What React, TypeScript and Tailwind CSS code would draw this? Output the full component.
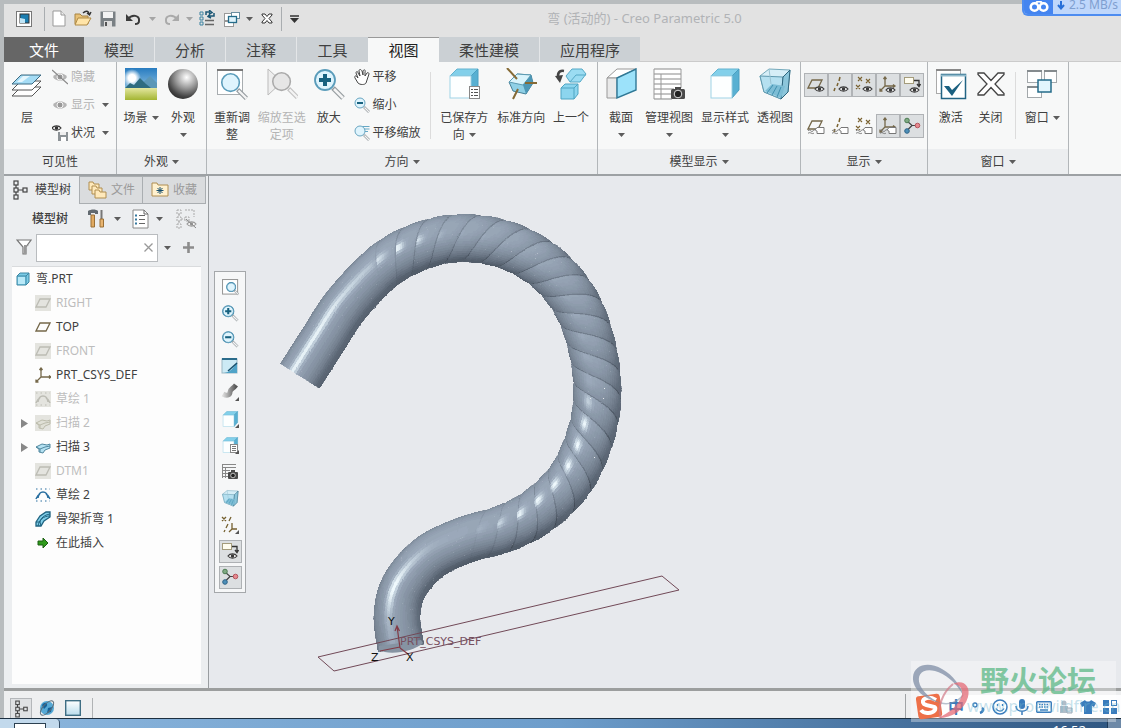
import React from "react";
import type { ReactNode } from "react";

/* ---------- shared drawing helpers ---------- */

function Svg({ w = 16, h, box, children }: { w?: number; h?: number; box?: string; children: ReactNode }) {
  const hh = h ?? w;
  return (
    <svg width={w} height={hh} viewBox={box ?? `0 0 ${w} ${hh}`} fill="none" aria-hidden="true" className="block shrink-0">
      {children}
    </svg>
  );
}

function Caret({ color = "#5c5c5c" }: { color?: string }) {
  return (
    <Svg w={7} h={4}>
      <path d="M0 0H7L3.500 4Z" fill={color} />
    </Svg>
  );
}

function Eye({ x, y, c = "#3a3a3a" }: { x: number; y: number; c?: string }) {
  return (
    <g transform={`translate(${x} ${y})`}>
      <path d="M0 3C2 .2 7 .2 9 3C7 5.9 2 5.9 0 3Z" fill="#fff" stroke={c} strokeWidth="1.2" />
      <circle cx="4.5" cy="3" r="1.8" fill={c} />
    </g>
  );
}

function Tag({ x, y }: { x: number; y: number }) {
  return (
    <g transform={`translate(${x} ${y})`}>
      <path d="M2 3L4 .5H11V6.500H4V4" fill="#fff" stroke="#777" />
      <path d="M-5 4C-3 1 -2 6 0 4C1 2 2 3 4 4M-5 6.500C-3 4 -1 8 1 6" stroke="#777" />
    </g>
  );
}

function Glass({ sign, muted }: { sign?: "+" | "-"; muted?: boolean }) {
  const rim = muted ? "#aaa" : "#5a9cba";
  return (
    <g>
      <path d="M20 20L30 30" stroke={muted ? "#c2c2c2" : "#949b9f"} strokeWidth="5" />
      <path d="M21 21L30 30" stroke="#f4f4f4" strokeWidth="2.6" />
      <circle cx="12" cy="12" r="10" fill={muted ? "#e6e6e6" : "#dff4fd"} stroke={rim} strokeWidth="1.8" />
      {sign && <path d={sign === "+" ? "M12 6V18M6 12H18" : "M6 12H18"} stroke="#17617f" strokeWidth="4" />}
    </g>
  );
}

const Cube = ({ list }: { list?: boolean }) => (
  <g>
    <path d="M2 8L9 1H30L23 8Z" fill="#83d0ea" stroke="#62b3d0" />
    <path d="M23 8L30 1V22L23 30Z" fill="#58b0d2" stroke="#4a9fc1" />
    <rect x="2" y="8" width="21" height="22" fill="#fdffff" stroke="#9fd3e6" />
    {list && (
      <g>
        <rect x="21.500" y="18.500" width="10" height="12" fill="#fff" stroke="#888" />
        <path d="M23 21.500H25M26 21.500H30M23 24.500H25M26 24.500H30M23 27.500H25M26 27.500H30" stroke="#555" />
      </g>
    )}
  </g>
);

const Persp = () => (
  <g>
    <path d="M1 8L10 1L31 2L29 24L22 31L5 24Z" fill="#d6eef7" stroke="#74a9bb" />
    <path d="M1 8L24 9L22 31L5 24Z" fill="#b5e0f0" stroke="#5f98ae" />
    <path d="M24 9L31 2L29 24L22 31Z" fill="#8cc6db" stroke="#2d647c" />
    <path d="M6 23L13 16L26 18L22 30Z" fill="#7dbdd5" />
    <path d="M8 25L14 17M13 27L18 18M18 29L22 19" stroke="#3f90af" />
    <path d="M10 1L12 16" stroke="#9ac3d2" />
  </g>
);

const Report = () => (
  <g>
    <path d="M2 1H29V30H2Z" fill="#fff" />
    <path d="M2 1H29M2 6H29M2 11H29M2 16H29M2 21H22M2 26H20M2 31H20" stroke="#8a8a8a" strokeWidth="1.200" />
    <path d="M2 1V31M9 6V31M29 1V20" stroke="#999" />
    <rect x="19" y="21" width="14" height="10" rx="1.500" fill="#4a4a4a" />
    <rect x="23" y="19" width="6" height="3" fill="#4a4a4a" />
    <circle cx="26" cy="26" r="3.800" fill="#222" stroke="#ddd" strokeWidth="1" />
  </g>
);

const Triad = () => (
  <g>
    <path d="M4 4L9 8.500L15 8.500M9 8.500L4 13.500" stroke="#444" strokeWidth="1.200" />
    <circle cx="4" cy="3.500" r="2.300" fill="#7fa982" stroke="#4e7d55" />
    <circle cx="14.500" cy="8.500" r="2.300" fill="#e58a90" stroke="#b8555d" />
    <circle cx="4" cy="14" r="2.300" fill="#4d8fb8" stroke="#2f6488" />
  </g>
);

const Note = () => (
  <g>
    <rect x="1.500" y="1.500" width="9" height="6" fill="#fffdf0" stroke="#a49c7c" />
    <path d="M11 4.500H16V9M14 8L16 10.500L17.500 8" stroke="#333" strokeWidth="1.300" />
    <Eye x={7} y={11} />
  </g>
);

const Plane = ({ muted, eye, tag }: { muted?: boolean; eye?: boolean; tag?: boolean }) => (
  <g>
    {muted && <rect width="16" height="16" fill="#e4e4df" />}
    <path d="M5 4H15L11 12H1Z" stroke={muted ? "#bcbcb4" : "#75684a"} strokeWidth="1.300" />
    {eye && <Eye x={8} y={10} />}
    {tag && <Tag x={6} y={10} />}
  </g>
);

const Axis = () => <path d="M9 1L8 5M7 7L6 10M4 12L3 15" stroke="#7a6230" strokeWidth="1.500" />;
const Points = () => <path d="M3 1L7 5M7 1L3 5M11 3L15 7M15 3L11 7M1 9L5 13M5 9L1 13" stroke="#7a6230" strokeWidth="1.100" />;
const Csys = () => (
  <path d="M6 1V10H16M6 10L1 15M4.500 3L6 1L7.500 3M14 8.500L16 10L14 11.500M1 12.500V15H3.500" stroke="#75684a" strokeWidth="1.300" />
);

const TreeNodes = ({ c = "#444" }: { c?: string }) => (
  <g stroke={c} strokeWidth="1.200">
    <rect x="2" y="1" width="4" height="4" />
    <rect x="2" y="8" width="4" height="4" />
    <rect x="2" y="15" width="4" height="4" />
    <rect x="11" y="8" width="4" height="4" />
    <path d="M4 5V8M4 12V15M6 10H11" />
  </g>
);

const Windows = () => (
  <g stroke="#a3a8ab">
    <rect x="1.500" y="2.500" width="14" height="12" fill="#fff" />
    <rect x="18.500" y="2.500" width="12" height="12" fill="#fff" />
    <rect x="1.500" y="18.500" width="14" height="11" fill="#fff" />
    <path d="M1 3H16M18 3H31M1 19H16" stroke="#858b8e" strokeWidth="2" />
    <rect x="12" y="12" width="13" height="12" fill="#e3f6fd" stroke="#246b89" strokeWidth="1.500" />
  </g>
);

/* ---------- ribbon ---------- */

function Big({ icon, lines, caret, muted, width }: { icon: ReactNode; lines: string[]; caret?: "inline" | "below"; muted?: boolean; width: string }) {
  return (
    <button type="button" disabled={muted} className={`flex flex-col items-center pt-1.5 ${width}`}>
      <span className="mb-[9px] flex h-8 items-center justify-center">{icon}</span>
      {lines.map((l, i) => (
        <span key={l} className={`flex items-center gap-1 whitespace-nowrap text-[12px] leading-[17px] ${muted ? "text-[#b4b4b4]" : "text-[#404040]"}`}>
          {l}
          {caret === "inline" && i === lines.length - 1 && <Caret />}
        </span>
      ))}
      {caret === "below" && (
        <span className="flex h-[17px] items-center">
          <Caret />
        </span>
      )}
    </button>
  );
}

function Small({ icon, text, caret, muted }: { icon: ReactNode; text: string; caret?: boolean; muted?: boolean }) {
  return (
    <button type="button" disabled={muted} className={`flex h-7 items-center gap-[3px] whitespace-nowrap text-[12px] ${muted ? "text-[#b4b4b4]" : "text-[#404040]"}`}>
      {icon}
      <span>{text}</span>
      {caret && (
        <span className="ml-1">
          <Caret />
        </span>
      )}
    </button>
  );
}

function Group({ label, caret, width, children }: { label: string; caret?: boolean; width: string; children: ReactNode }) {
  return (
    <section aria-label={label} className={`flex shrink-0 flex-col border-r border-[#b2b6b9] ${width}`}>
      <div className="flex h-[87px] items-stretch">{children}</div>
      <div className="flex h-[25px] items-center justify-center gap-1 bg-[#eceef0] text-[12px] text-[#404040]">
        {label}
        {caret && <Caret />}
      </div>
    </section>
  );
}

const EyeIcon = ({ slash }: { slash?: boolean }) => (
  <Svg>
    <path d="M1 8C4 3 12 3 15 8C12 13 4 13 1 8Z" fill="#b4b4b4" />
    <circle cx="8" cy="8" r="3" fill="#999" stroke="#f4f4f4" />
    {slash && <path d="M0 1L16 15" stroke="#888" strokeWidth="1.300" />}
  </Svg>
);

const toggles: { name: string; on: boolean; art: ReactNode }[] = [
  { name: "平面显示", on: true, art: <Plane eye /> },
  { name: "轴显示", on: true, art: <g><Axis /><Eye x={8} y={10} /></g> },
  { name: "点显示", on: true, art: <g><Points /><Eye x={8} y={10} /></g> },
  { name: "坐标系显示", on: true, art: <g><Csys /><Eye x={7} y={11} /></g> },
  { name: "注释显示", on: true, art: <Note /> },
  { name: "平面标记显示", on: false, art: <Plane tag /> },
  { name: "轴标记显示", on: false, art: <g><Axis /><Tag x={6} y={10} /></g> },
  { name: "点标记显示", on: false, art: <g><Points /><Tag x={6} y={10} /></g> },
  { name: "坐标系标记显示", on: true, art: <g><Csys /><Tag x={6} y={10} /></g> },
  { name: "旋转中心", on: true, art: <Triad /> },
];

function Toggle({ item }: { item: (typeof toggles)[number] }) {
  return (
    <button type="button" aria-label={item.name} aria-pressed={item.on} className={`flex h-6 w-6 items-center justify-center ${item.on ? "border border-[#b0b3b6] bg-[#dcdfe1]" : ""}`}>
      <Svg w={18}>{item.art}</Svg>
    </button>
  );
}

function Ribbon() {
  return (
    <div className="flex h-[112px] bg-[#f7f8f8]">
      <Group label="可见性" width="w-[113px]">
        <Big width="w-[46px]" lines={["层"]} icon={
          <Svg w={32}>
            <path d="M1 28L10 19H30L21 28Z" fill="#fff" stroke="#555" />
            <path d="M1 22L10 13H30L21 22Z" fill="#fff" stroke="#555" />
            <path d="M1 16L10 7H30L21 16Z" fill="#a5dcf5" stroke="#3c6b82" />
            <path d="M6 14L12 8H19L11 14Z" fill="#e5f6fd" />
          </Svg>} />
        <div className="flex flex-col pt-px pl-0.5">
          <Small muted text="隐藏" icon={<EyeIcon slash />} />
          <Small muted text="显示" caret icon={<EyeIcon />} />
          <Small text="状况" caret icon={
            <Svg>
              <Eye x={0} y={0} c="#333" />
              <path d="M6 7H16V16H6Z" fill="#8c9296" />
              <path d="M8 7H14V10H8Z" fill="#eee" />
              <path d="M9 12H14V16H9Z" fill="#fff" />
            </Svg>} />
        </div>
      </Group>
      <Group label="外观" caret width="w-[90px]">
        <Big width="w-12" lines={["场景"]} caret="inline" icon={
          <Svg w={32}>
            <defs>
              <linearGradient id="sky" x2="0" y2="1"><stop stopColor="#287cc0" /><stop offset="1" stopColor="#bfe3f4" /></linearGradient>
              <linearGradient id="grass" x2="0" y2="1"><stop stopColor="#e4e7a0" /><stop offset="1" stopColor="#a3b532" /></linearGradient>
              <radialGradient id="sun"><stop stopColor="#fff" /><stop offset=".4" stopColor="#fff" /><stop offset="1" stopColor="#fff" stopOpacity="0" /></radialGradient>
            </defs>
            <rect width="32" height="32" fill="url(#sky)" />
            <circle cx="7" cy="10" r="9" fill="url(#sun)" />
            <path d="M12 20L25 8L32 15V22H12Z" fill="#5c97b7" />
            <path d="M0 20L5 15L9 17L15 10L21 16L26 20V22H0Z" fill="#2f6c80" />
            <rect y="20" width="32" height="12" fill="url(#grass)" />
          </Svg>} />
        <Big width="w-9" lines={["外观"]} caret="below" icon={
          <Svg w={32}>
            <defs><radialGradient id="ball" cx=".62" cy=".28" r=".8"><stop stopColor="#fff" /><stop offset=".45" stopColor="#999" /><stop offset=".8" stopColor="#444" /><stop offset="1" stopColor="#282828" /></radialGradient></defs>
            <circle cx="16" cy="16" r="15" fill="url(#ball)" />
          </Svg>} />
      </Group>
      <Group label="方向" caret width="w-[391px]">
        <Big width="w-[50px]" lines={["重新调", "整"]} icon={
          <Svg w={32}><rect x="1.500" y="1.500" width="25" height="25" fill="#fff" stroke="#a8adb0" /><path d="M1 2H27" stroke="#777" strokeWidth="2" /><g transform="translate(4 4) scale(.88)"><Glass /></g></Svg>} />
        <Big width="w-[50px]" muted lines={["缩放至选", "定项"]} icon={
          <Svg w={32}><path d="M2 1V27L16 14Z" fill="#eee" stroke="#bbb" /><g transform="translate(5 3) scale(.88)"><Glass muted /></g></Svg>} />
        <Big width="w-11" lines={["放大"]} icon={<Svg w={32}><Glass sign="+" /></Svg>} />
        <div className="flex w-[80px] flex-col pt-px pl-[3px]">
          <Small text="平移" icon={
            <Svg><path d="M4 14L1 9C0 7 2 6 3 8L4 9L2 4C2 2 4 2 4 4L6 7L5 2C5 0 7 0 8 2L9 6V2C10 0 12 1 11 3V7L13 4C14 3 15 4 15 5L12 14C11 16 6 16 4 14Z" fill="#fff" stroke="#444" /></Svg>} />
          <Small text="缩小" icon={<Svg box="0 0 32 32"><Glass sign="-" /></Svg>} />
          <Small text="平移缩放" icon={<Svg box="0 0 32 32"><Glass /><path d="M17 3H31M20 8H31M22 13H28" stroke="#65a8c5" strokeWidth="2" /></Svg>} />
        </div>
        <div className="my-2.5 w-px bg-[#dcdcdc]" />
        <Big width="w-[66px]" lines={["已保存方", "向"]} caret="inline" icon={<Svg w={32}><Cube list /></Svg>} />
        <Big width="w-12" lines={["标准方向"]} icon={
          <Svg w={32}>
            <path d="M4 14L12 6L26 7L28 15L21 26L8 23Z" fill="#8fd0e6" stroke="#447f97" />
            <path d="M4 14L12 6L26 7L18 17Z" fill="#d9f3fb" stroke="#5b9ab1" />
            <path d="M18 17L26 7L28 15L21 26Z" fill="#4c97b6" />
            <path d="M2 0L12 11M20 15H32M13 21L8 31" stroke="#856a35" strokeWidth="2" />
          </Svg>} />
        <Big width="w-[52px]" lines={["上一个"]} icon={
          <Svg w={32}>
            <path d="M11 8L17 1H27L31 6L25 14H15Z" fill="#9bdcf2" stroke="#55a9c6" /><path d="M15 14L21 7H31" stroke="#55a9c6" />
            <path d="M6 20L10 16H23V26L19 31H6Z" fill="#8cd5ee" stroke="#4fa5c3" /><path d="M6 20H19V31M19 20L23 16" stroke="#4fa5c3" />
            <path d="M9 3C3 2 2 7 4 11" stroke="#444" strokeWidth="2.500" /><path d="M0 8L5 15L8 7Z" fill="#444" />
          </Svg>} />
      </Group>
      <Group label="模型显示" caret width="w-[203px]">
        <Big width="w-[46px]" lines={["截面"]} caret="below" icon={
          <Svg w={32}><path d="M2 10L12 1H31L12 10Z" fill="#fff" stroke="#999" /><path d="M2 10H12V30H2Z" fill="#e9e9e9" stroke="#999" /><path d="M12 10L31 1V22L12 30Z" fill="#9ce2fa" stroke="#2f7896" strokeWidth="1.400" /></Svg>} />
        <Big width="w-[50px]" lines={["管理视图"]} caret="below" icon={<Svg w={34} h={32}><Report /></Svg>} />
        <Big width="w-[62px]" lines={["显示样式"]} caret="below" icon={<Svg w={32}><Cube /></Svg>} />
        <Big width="w-[38px]" lines={["透视图"]} icon={<Svg w={32}><Persp /></Svg>} />
      </Group>
      <Group label="显示" caret width="w-[127px]">
        <div className="flex flex-col gap-[17px] pt-[11px] pl-[3px]">
          <div className="flex">{toggles.slice(0, 5).map((t) => <Toggle key={t.name} item={t} />)}</div>
          <div className="flex">{toggles.slice(5).map((t) => <Toggle key={t.name} item={t} />)}</div>
        </div>
      </Group>
      <Group label="窗口" caret width="w-[141px]">
        <Big width="w-[46px]" lines={["激活"]} icon={
          <Svg w={32}><rect x="1.500" y="1.500" width="24" height="24" fill="#fff" stroke="#aaa" /><path d="M1 2H26" stroke="#888" strokeWidth="2" /><rect x="6.500" y="6.500" width="24" height="24" fill="#fff" stroke="#226484" strokeWidth="1.500" /><path d="M6 7.500H31" stroke="#8fb9cb" strokeWidth="2" /><path d="M9 18H14L17 22L28 12L17 28Z" fill="#1b6080" /></Svg>} />
        <Big width="w-[34px]" lines={["关闭"]} icon={
          <Svg w={28} h={24}><path d="M1 1H7L14 8.500L21 1H27V2.500L18 12L27 21.500V23H21L14 15.500L7 23H1V21.500L10 12L1 2.500Z" fill="#fff" stroke="#444" strokeWidth="1.300" /></Svg>} />
        <div className="my-2.5 ml-2 w-px bg-[#dcdcdc]" />
        <Big width="w-[52px]" lines={["窗口"]} caret="inline" icon={<Svg w={32}><Windows /></Svg>} />
      </Group>
    </div>
  );
}

/* ---------- title bar and tabs ---------- */

const QuickButton = ({ name, children, width = "w-6" }: { name: string; children: ReactNode; width?: string }) => (
  <button type="button" aria-label={name} className={`flex h-6 items-center justify-center ${width}`}>{children}</button>
);

function TitleBar() {
  return (
    <header className="flex h-[33px] items-center pb-1 text-[#b1b3b6]">
      <QuickButton name="系统菜单" width="w-10">
        <Svg><rect x=".5" y=".5" width="15" height="15" fill="#fff" stroke="#777" /><rect x="4" y="3" width="9" height="9" fill="#1b7db0" stroke="#333" /><path d="M4 12V7L9 8V12Z" fill="#bfe4f5" /></Svg>
      </QuickButton>
      <div className="h-6 w-px bg-[#a9adb0]" />
      <QuickButton name="新建" width="w-7"><Svg w={14} h={17}><path d="M1 1H9L13 5V16H1Z" fill="#fff" stroke="#999" /><path d="M9 1V5H13" stroke="#999" fill="#eee" /></Svg></QuickButton>
      <QuickButton name="打开" width="w-5"><Svg w={18}><path d="M1 4H6L8 6H14V14H1Z" fill="#e8c177" stroke="#a88442" /><path d="M4 8H17L13 15H1Z" fill="#ffe4a8" stroke="#b08b47" /><path d="M9 3C12 0 15 1 15 4M13 3L15.500 5L17 2" stroke="#333" strokeWidth="1.400" /></Svg></QuickButton>
      <QuickButton name="保存" width="w-[30px]"><Svg><path d="M.5 .5H15.500V15.500H.5Z" fill="#7a8084" /><path d="M3 1H13V7H3Z" fill="#f3f3f3" /><path d="M4 10H12V16H4Z" fill="#ddd" /><path d="M5 11H7V15H5Z" fill="#555" /></Svg></QuickButton>
      <QuickButton name="撤消" width="w-5"><Svg w={17} h={14}><path d="M3 7C7 2 15 3 14 9C14 11 12 12 10 12" stroke="#3a3a3a" strokeWidth="2" /><path d="M1 2V9H8Z" fill="#3a3a3a" /></Svg></QuickButton>
      <QuickButton name="撤消列表" width="w-[18px]"><Caret color="#a5a5a5" /></QuickButton>
      <QuickButton name="重做" width="w-5"><Svg w={17} h={14}><path d="M14 7C10 2 2 3 3 9C3 11 5 12 7 12" stroke="#aaa" strokeWidth="2" /><path d="M16 2V9H9Z" fill="#aaa" /></Svg></QuickButton>
      <QuickButton name="重做列表" width="w-4"><Caret color="#a5a5a5" /></QuickButton>
      <QuickButton name="重新生成" width="w-5"><Svg w={17}><path d="M1 2H4V5H1ZM1 7H4V10H1ZM1 12H4V15H1Z" stroke="#3d83a1" /><path d="M6 10.500H15M6 14.500H15" stroke="#666" strokeWidth="1.500" /><path d="M7 5V2H11M10 0L13 2.500L10 4M15 3V6H10M11 4L9 6.500L12 8" stroke="#1b5775" strokeWidth="1.500" /></Svg></QuickButton>
      <QuickButton name="窗口" width="w-7"><Svg w={17} h={16}><g fill="#fff" stroke="#999"><rect x="1.500" y="2.500" width="9" height="7" /><rect x="1.500" y="10.500" width="9" height="5" /></g><rect x="8.500" y="1.500" width="8" height="6" fill="#fff" stroke="#6c8fa0" /><rect x="5.500" y="5.500" width="8" height="6" fill="#dff3fb" stroke="#246b89" strokeWidth="1.300" /></Svg></QuickButton>
      <QuickButton name="窗口列表" width="w-2"><Caret /></QuickButton>
      <QuickButton name="关闭" width="w-7"><Svg w={12} h={11}><path d="M1 1H4L6 3.500L8 1H11V2L8 5.500L11 9V10H8L6 7.500L4 10H1V9L4 5.500L1 2Z" fill="#fff" stroke="#333" /></Svg></QuickButton>
      <div className="h-6 w-px bg-[#a9adb0]" />
      <QuickButton name="自定义快速访问工具栏"><Svg w={9} h={8}><path d="M0 1H9" stroke="#333" strokeWidth="1.500" /><path d="M0 3H9L4.500 8Z" fill="#333" /></Svg></QuickButton>
      <h1 className="min-w-0 flex-1 truncate pr-[138px] text-center text-[13px]">弯 (活动的) - Creo Parametric 5.0</h1>
    </header>
  );
}

const tabs = [
  { text: "文件", cls: "w-20 bg-[#666] text-white" },
  { text: "模型", cls: "w-[71px] bg-[#cbd0d4] border-r border-[#e4e6e8]" },
  { text: "分析", cls: "w-[71px] bg-[#cbd0d4] border-r border-[#e4e6e8]" },
  { text: "注释", cls: "w-[71px] bg-[#cbd0d4] border-r border-[#e4e6e8]" },
  { text: "工具", cls: "w-[71px] bg-[#cbd0d4]" },
  { text: "视图", cls: "w-[71px] bg-[#f7f8f8] border-t border-[#999] text-[#222]" },
  { text: "柔性建模", cls: "w-[101px] bg-[#cbd0d4] border-r border-[#e4e6e8]" },
  { text: "应用程序", cls: "w-[100px] bg-[#cbd0d4]" },
];

/* ---------- model tree ---------- */

type Row = { text: string; muted?: boolean; expand?: boolean; art: ReactNode };

const Arch = ({ c }: { c: string }) => (
  <g><path d="M3 11C4 3 12 3 13 11M1 12C2 9 3 8 5 7M15 12C14 9 13 8 11 7" stroke={c} strokeWidth="1.500" /><path d="M1 2H15M1 14H15" stroke={c} strokeDasharray="1.500 3" /></g>
);
const Sweep = ({ a, b }: { a: string; b: string }) => (
  <g><path d="M1 8L7 5L12 6L15 5V9L10 11L8 14L4 13V10Z" fill={a} stroke={b} /><path d="M1 8L5 10L10 8L15 7M5 10V13" stroke={b} /></g>
);

const rows: Row[] = [
  { text: "RIGHT", muted: true, art: <Plane muted /> },
  { text: "TOP", art: <Plane /> },
  { text: "FRONT", muted: true, art: <Plane muted /> },
  { text: "PRT_CSYS_DEF", art: <Csys /> },
  { text: "草绘 1", muted: true, art: <g><rect width="16" height="16" fill="#e4e4df" /><Arch c="#bcbcb4" /></g> },
  { text: "扫描 2", muted: true, expand: true, art: <g><rect width="16" height="16" fill="#e4e4df" /><Sweep a="#e0e0d6" b="#bcbcac" /></g> },
  { text: "扫描 3", expand: true, art: <Sweep a="#b4e1f2" b="#5389a0" /> },
  { text: "DTM1", muted: true, art: <Plane muted /> },
  { text: "草绘 2", art: <Arch c="#2a6fa0" /> },
  { text: "骨架折弯 1", art: <g><path d="M1 11L5 5L11 1H15V6L9 10L6 15H1Z" fill="#7fcde8" stroke="#1e627f" strokeWidth="1.300" /><path d="M1 11H5C6 7 9 4 15 3M3 15C4 9 8 5 15 5M5 11L6 15" stroke="#1e627f" /></g> },
  { text: "在此插入", art: <path d="M3 6H8V3L13 8L8 13V10H3Z" fill="#2f9a1c" stroke="#1c5e12" /> },
];

function TreePanel() {
  return (
    <aside className="flex w-[205px] shrink-0 flex-col border-r border-[#999da0] bg-[#eceef0] pr-[2px] text-[12px] text-[#404040]">
      <div role="tablist" className="flex h-7 shrink-0">
        <button role="tab" aria-selected="true" className="flex w-[75px] items-center gap-1.5 pl-2 whitespace-nowrap">
          <Svg w={17} h={20}><TreeNodes /></Svg>模型树
        </button>
        <button role="tab" aria-selected="false" className="flex w-16 items-center gap-1 overflow-hidden border border-[#aaaeb1] bg-[#dadcde] pl-2 whitespace-nowrap text-[#9a9a9a]">
          <Svg w={19} h={18}><g fill="#ffe9bb" stroke="#b08e50"><path d="M1 1H5L6 3H11V9H1Z" /><path d="M4 5H8L9 7H14V13H4Z" /><path d="M7 9H11L12 11H18V17H7Z" /></g></Svg>
          <span className="w-6 overflow-hidden">文件</span>
        </button>
        <button role="tab" aria-selected="false" className="flex w-[63px] items-center gap-1 overflow-hidden border border-l-0 border-[#aaaeb1] bg-[#dadcde] pl-2 whitespace-nowrap text-[#9a9a9a]">
          <Svg w={18}><path d="M1 2H6L7 4H17V15H1Z" fill="#fff1cf" stroke="#b08e50" /><path d="M9 6V13M5.500 9.500H12.500M6.500 7L11.500 12M11.500 7L6.500 12" stroke="#164e6c" /></Svg>
          <span className="w-6 overflow-hidden">收藏</span>
        </button>
      </div>
      <div className="flex h-[29px] shrink-0 items-center pl-7">
        <h2 className="w-[55px] text-[12px] font-medium">模型树</h2>
        <button aria-label="设置" className="w-[19px]"><Svg w={18} h={20}><path d="M1 2C4 0 9 0 11 2V5H8V4H4V6H1Z" fill="#626a70" /><path d="M4 6H7.500V18H4Z" fill="#e0aa62" stroke="#9b7036" /><path d="M14.500 1V10" stroke="#777" strokeWidth="2" /><path d="M13 10H16.500V18H13Z" fill="#e8b470" stroke="#9b7036" /></Svg></button>
        <button aria-label="设置列表" className="ml-2 w-4"><Caret /></button>
        <button aria-label="显示" className="ml-0.5 w-[18px]"><Svg w={17} h={20}><path d="M1 1H12L16 5V19H1Z" fill="#fff" stroke="#888" /><path d="M12 1V5H16M7 6.500H13M7 10.500H13M7 14.500H13" stroke="#666" /><path d="M4 5.500V7.500M4 9.500V11.500M4 13.500V15.500" stroke="#3579a0" strokeWidth="2" /></Svg></button>
        <button aria-label="显示列表" className="ml-1.5 w-5"><Caret /></button>
        <button aria-label="隐藏项" disabled><Svg w={21} h={20}><g stroke="#a9a9a9" strokeDasharray="2 1"><path d="M1 1H5V5H1ZM1 8H5V12H1ZM1 15H5V19H1ZM9 1H18V8M9 8H13V12H9ZM3 5V8M3 12V15M5 10H9" /></g><Eye x={11} y={12} c="#999" /><path d="M10 10L20 19" stroke="#888" /></Svg></button>
      </div>
      <div className="flex h-[29px] shrink-0 items-center pl-3">
        <Svg w={16} h={17}><path d="M1 1H15L10 8V15H7V8Z" fill="#fff" stroke="#777" strokeWidth="1.200" /><path d="M8 6H13L10 8V15H8Z" fill="#999" /></Svg>
        <div className="ml-1 flex h-7 w-[122px] items-center border border-[#b9bcbf] bg-white pr-1">
          <input aria-label="筛选模型树" className="min-w-0 flex-1 px-1 outline-none" />
          <button aria-label="清除"><Svg w={9}><path d="M.5 .5L8.500 8.500M8.500 .5L.5 8.500" stroke="#999" strokeWidth="1.300" /></Svg></button>
        </div>
        <button aria-label="筛选列表" className="ml-1.5 w-[18px]"><Caret /></button>
        <button aria-label="添加"><Svg w={13}><path d="M6.500 1V12M1 6.500H12" stroke="#8c8c8c" strokeWidth="2.600" /></Svg></button>
      </div>
      <ul role="tree" aria-label="模型树" className="mt-1 mr-[5px] mb-1 ml-2 flex-1 overflow-hidden border-t border-[#d9dbdd] bg-[#fdfdfd]">
        <li role="treeitem" className="flex h-6 items-center gap-1.5 pl-1">
          <Svg w={14}><path d="M1 4L4 1H13V10L10 13H1Z" fill="#79cbe6" stroke="#3d86a3" /><path d="M1 4H10V13M10 4L13 1" stroke="#3d86a3" /><path d="M2 5H9V12H2Z" fill="#b9e9f8" /></Svg>
          弯.PRT
        </li>
        {rows.map((r) => (
          <li role="treeitem" key={r.text} className={`flex h-6 items-center gap-[5px] pl-2 whitespace-nowrap ${r.muted ? "text-[#bdbdbd]" : ""}`}>
            <span className="w-[10px]">{r.expand && <Svg w={8} h={9}><path d="M1 0L8 4.500L1 9Z" fill="#888" /></Svg>}</span>
            <Svg>{r.art}</Svg>
            {r.text}
          </li>
        ))}
      </ul>
    </aside>
  );
}

/* ---------- 3D model ---------- */

type P = [number, number];

const spine: P[] = [
  [300, 376], [323, 340], [347, 304], [384, 266], [421, 246], [462, 238], [506, 245], [543, 265], [571, 295], [588, 332],
  [597, 380], [593, 427], [572, 477], [538, 511], [503, 529], [465, 540], [430, 557], [405, 585], [397, 615], [401, 648],
];

function sampleSpine(): P[] {
  const out: P[] = [];
  for (let i = 0; i < spine.length - 1; i++) {
    const a = spine[Math.max(0, i - 1)], b = spine[i], c = spine[i + 1], d = spine[Math.min(spine.length - 1, i + 2)];
    for (let k = 0; k < 20; k++) {
      const t = k / 20;
      const f = (n: 0 | 1) =>
        0.5 * (2 * b[n] + (c[n] - a[n]) * t + (2 * a[n] - 5 * b[n] + 4 * c[n] - d[n]) * t * t + (3 * b[n] - a[n] - 3 * c[n] + d[n]) * t * t * t);
      out.push([f(0), f(1)]);
    }
  }
  out.push(spine[spine.length - 1]);
  return out;
}

const clamp = (v: number, lo: number, hi: number) => Math.min(hi, Math.max(lo, v));

/* Builds the twisted rod as a shaded mesh, one path per tone. */
function buildRod() {
  const pts = sampleSpine();
  const len = [0];
  for (let i = 1; i < pts.length; i++) len.push(len[i - 1] + Math.hypot(pts[i][0] - pts[i - 1][0], pts[i][1] - pts[i - 1][1]));
  const total = len[len.length - 1];
  const frame = (s0: number) => {
    const s = clamp(s0, 0, total);
    let i = 1;
    while (i < len.length - 1 && len[i] < s) i++;
    const t = (s - len[i - 1]) / (len[i] - len[i - 1]);
    const a = pts[Math.max(0, i - 11)], b = pts[Math.min(pts.length - 1, i + 10)];
    const l = Math.hypot(b[0] - a[0], b[1] - a[1]);
    return {
      x: pts[i - 1][0] + (pts[i][0] - pts[i - 1][0]) * t,
      y: pts[i - 1][1] + (pts[i][1] - pts[i - 1][1]) * t,
      tx: (b[0] - a[0]) / l,
      ty: (b[1] - a[1]) / l,
    };
  };
  const period = 22, step = 2, cols = 28, skew = 13;
  const start = 125, end = total - 135;
  const strength = (s: number) => clamp((s - start) / 40, 0, 1) * clamp((end - s) / 60, 0, 1);
  const gloss = (s: number) => 1 - clamp((s - 165) / 45, 0, 1) * clamp((490 - s) / 50, 0, 1) * 0.93;
  const phase = (u: number) => (((u % period) + period) % period) / period * 2 - 1;
  const vertex = (u: number, th: number) => {
    const s = clamp(u - skew * th, 0, total);
    const f = frame(s);
    const q = phase(u);
    const r = 23 + strength(s) * (0.8 - 0.8 * q * q);
    const o = r * Math.sin(th);
    return { x: f.x - f.ty * o, y: f.y + f.tx * o };
  };
  const tones = 64;
  const paths: string[] = Array.from({ length: tones }, () => "");
  const fix = (p: { x: number; y: number }) => `${p.x.toFixed(1)} ${p.y.toFixed(1)}`;
  for (let u = -44; u < total + 44; u += step) {
    for (let c = 0; c < cols; c++) {
      const t0 = -Math.PI / 2 + (Math.PI * c) / cols, t1 = t0 + Math.PI / cols;
      const tm = (t0 + t1) / 2, um = u + step / 2;
      const s = um - skew * tm;
      if (s < -step || s > total + step) continue;
      const f = frame(s);
      const bump = strength(s) * phase(um) * 0.3;
      let nx = -f.ty * Math.sin(tm) + f.tx * bump;
      let ny = f.tx * Math.sin(tm) + f.ty * bump;
      let nz = Math.cos(tm);
      const l = Math.hypot(nx, ny, nz);
      nx /= l; ny /= l; nz /= l;
      const diff = Math.max(0, nx * -0.42 + ny * -0.4 + nz * 0.81);
      const fill = Math.max(0, nx * 0.5 + ny * -0.5 + nz * 0.7);
      const spec = Math.pow(Math.max(0, nx * -0.36 + ny * -0.16 + nz * 0.92), 80) * gloss(s);
      const seam = phase(um) > 0.8 ? strength(s) * 0.09 : 0;
      const tone = clamp(0.15 + 0.3 * diff + 0.1 * fill + 0.46 * spec - seam, 0, 1);
      paths[Math.min(tones - 1, Math.floor(tone * tones))] +=
        `M${fix(vertex(u, t0))}L${fix(vertex(u, t1))} ${fix(vertex(u + step - 0.01, t1))} ${fix(vertex(u + step - 0.01, t0))}Z`;
    }
  }
  const stops = [[0, 56, 64, 74], [0.2, 92, 103, 117], [0.52, 154, 168, 185], [0.75, 194, 208, 220], [1, 242, 252, 255]];
  return paths.map((d, i) => {
    const v = i / (tones - 1);
    let k = 1;
    while (k < stops.length - 1 && stops[k][0] < v) k++;
    const a = stops[k - 1], b = stops[k], t = (v - a[0]) / (b[0] - a[0]);
    const m = (n: number) => Math.round(a[n] + (b[n] - a[n]) * t);
    return { d, color: `rgb(${m(1)},${m(2)},${m(3)})` };
  });
}

const rod = buildRod();

function ModelView() {
  return (
    <svg className="block h-[512px] w-[912px] max-w-none" viewBox="209 176 912 512" fill="none" role="img" aria-label="弯.PRT 模型">
      <g shapeRendering="crispEdges" strokeWidth=".6">
        {rod.map((p) => p.d && <path key={p.color} d={p.d} fill={p.color} stroke={p.color} />)}
      </g>
      <path d="M379 650C390 656 415 651 423 643L421 640L379 646Z" fill="#8693a2" />
      <path d="M318 657L662 576L679 590L334 671Z" stroke="#714957" />
      <path d="M400 648L397 626M395 631L397 626L399.500 631M400 647L380 651M400 648L408 654" stroke="#823a46" strokeWidth="1.200" />
      <g fontFamily="'DejaVu Sans', sans-serif" fontSize="11">
        <text x="400" y="645" fill="#77505f">PRT_CSYS_DEF</text>
        <g fill="#111"><text x="388" y="625">Y</text><text x="371" y="661">Z</text><text x="406" y="661">X</text></g>
      </g>
    </svg>
  );
}

const Corner = () => <path d="M18 14V18H14Z" fill="#555" />;
const Scaled = ({ children }: { children: ReactNode }) => <g transform="translate(1 1) scale(.52)">{children}</g>;

const viewTools: { name: string; on?: boolean; art: ReactNode }[] = [
  { name: "重新调整", art: <Scaled><rect x="1" y="1" width="29" height="28" fill="#fff" stroke="#999" strokeWidth="2" /><g transform="translate(8 6) scale(.8)"><circle cx="12" cy="12" r="10" stroke="#3f86a8" strokeWidth="4" /><Glass /></g></Scaled> },
  { name: "放大", art: <Scaled><circle cx="12" cy="12" r="10" stroke="#3f86a8" strokeWidth="3.500" /><Glass sign="+" /></Scaled> },
  { name: "缩小", art: <Scaled><circle cx="12" cy="12" r="10" stroke="#3f86a8" strokeWidth="3.500" /><Glass sign="-" /></Scaled> },
  { name: "重画", art: <g><rect x="1" y="2" width="15" height="14" fill="#cceaf5" stroke="#9bb8c4" /><path d="M1 2H16" stroke="#2b6c8b" strokeWidth="2" /><path d="M16 5V16H3C9 15 13 11 16 5Z" fill="#4fa3c8" /><path d="M7 14L16 6" stroke="#174f6c" strokeWidth="1.500" /></g> },
  { name: "渲染选项", art: <g><defs><linearGradient id="tube"><stop stopColor="#ddd" /><stop offset="1" stopColor="#555" /></linearGradient></defs><path d="M2 11C7 14 9 11 9 9C9 6 12 6 15 2" stroke="url(#tube)" strokeWidth="5" /><Corner /></g> },
  { name: "显示样式", art: <g><Scaled><Cube /></Scaled><Corner /></g> },
  { name: "已保存方向", art: <g><Scaled><Cube /></Scaled><rect x="9.500" y="8.500" width="7" height="8" fill="#fff" stroke="#888" /><path d="M11 10.500H15M11 12.500H15M11 14.500H15" stroke="#777" /><Corner /></g> },
  { name: "视图管理器", art: <g><path d="M1 1.500H15M1 4.500H15M1 7.500H9M1 10.500H7M1 13.500H7M1.500 1V15M4.500 4V15" stroke="#888" /><rect x="7" y="9" width="10" height="7" rx="1" fill="#4a4a4a" /><rect x="10" y="7" width="4" height="2" fill="#4a4a4a" /><circle cx="12" cy="12.500" r="2.300" fill="#222" stroke="#ddd" strokeWidth=".8" /></g> },
  { name: "透视图", art: <Scaled><Persp /></Scaled> },
  { name: "基准显示过滤器", art: <g><path d="M1 1L5 5M5 1L1 5M10 1L8 5M7 8L5 12M4 14L3 16M11 7V13H16M11 13L8 16" stroke="#75602f" strokeWidth="1.300" /><Corner /></g> },
  { name: "注释显示", on: true, art: <Note /> },
  { name: "旋转中心", on: true, art: <Triad /> },
];

/* ---------- desktop overlays ---------- */

function SpeedWidget() {
  return (
    <div className="absolute top-0 right-0 flex h-4 w-[99px] items-center overflow-hidden rounded-bl-md border-b-2 border-l-2 border-[#4d8cf0] bg-[#bfd7fb]">
      <span className="flex h-full w-[29px] items-center justify-center bg-[#4585f0]">
        <Svg w={20} h={12}><circle cx="5.500" cy="6" r="3.800" stroke="#fff" strokeWidth="2.600" /><circle cx="14.500" cy="6" r="3.800" stroke="#fff" strokeWidth="2.600" /><path d="M7 2C8 0 12 0 13 2" stroke="#fff" strokeWidth="2" /></Svg>
      </span>
      <span className="flex items-center gap-1 pb-1 pl-1 text-[12px] leading-4 whitespace-nowrap text-[#7f9fd0]">
        <Svg w={8} h={9}><path d="M4 0V7M1 4L4 7.500L7 4" stroke="#2870d8" strokeWidth="2" /></Svg>2.5 MB/s
      </span>
    </div>
  );
}

function Watermark() {
  return (
    <div className="absolute right-0 bottom-1.5 h-[61px] w-[210px]">
      <div className="absolute inset-y-0 right-[5px] left-0 bg-white/35" />
      <div className="absolute right-0 bottom-1 left-2 flex h-[23px] items-center gap-[7px] bg-white/90 pl-[29px]">
        <span className="w-4 text-center text-[16px] leading-none font-bold text-[#3a7cbc]">中</span>
        <Svg w={14}><circle cx="4" cy="5" r="2" stroke="#3a7cbc" strokeWidth="1.300" /><path d="M11 8C13 9 12 12 9 13" stroke="#3a7cbc" strokeWidth="2.500" /></Svg>
        <Svg><circle cx="8" cy="8" r="7" stroke="#3a7cbc" strokeWidth="1.500" /><path d="M5.500 5V7M10.500 5V7M4 9.500C6 13 10 13 12 9.500" stroke="#3a7cbc" strokeWidth="1.300" /></Svg>
        <Svg w={14} h={16}><rect x="4" y="0" width="6" height="10" rx="3" fill="#3a7cbc" /><path d="M1 7C1 14 13 14 13 7M7 12V16" stroke="#3a7cbc" strokeWidth="1.500" /></Svg>
        <Svg w={16} h={12}><rect x=".7" y=".7" width="14.600" height="10.600" rx="1" stroke="#3a7cbc" strokeWidth="1.400" /><path d="M3 3.500H13M3 6H13" stroke="#3a7cbc" strokeWidth="1.500" strokeDasharray="1.500 1" /><path d="M4 9H12" stroke="#3a7cbc" strokeWidth="1.500" /></Svg>
        <Svg w={14}><circle cx="5" cy="3" r="2.500" fill="#b0bdc8" /><path d="M1 6H9V13H1Z" fill="#b0bdc8" /><path d="M8 8H13V13H8Z" fill="#d9e0e6" stroke="#9eacb9" /></Svg>
        <Svg><path d="M5 1C6 3 10 3 11 1L16 4L14 8L12 7V15H4V7L2 8L0 4Z" fill="#3a7cbc" /></Svg>
        <Svg w={14}><rect x="0" y="0" width="6" height="6" fill="#3a7cbc" /><rect x="8.500" y=".5" width="5" height="5" stroke="#3a7cbc" /><rect x="0" y="8" width="6" height="6" fill="#3a7cbc" /><rect x="8" y="8" width="6" height="6" fill="#3a7cbc" /></Svg>
      </div>
      <div className="absolute bottom-1 left-14 text-[16px] whitespace-nowrap text-[#6fb5cf]/40">www.proewildfire.cn</div>
      <div className="absolute top-0 left-0">
        <Svg w={60} h={61}>
          <rect x="6" y="34" width="24" height="23" rx="3" fill="#ee7048" transform="rotate(-8 18 45)" />
          <path d="M25 39C16 34 9 39 13 43C18 46 26 44 24 49C20 54 12 52 10 49" stroke="#fff" strokeWidth="4" />
          <path d="M2 16C3 4 17 0 31 8C42 14 50 25 52 34C44 20 34 13 24 10C12 7 5 13 9 24C13 32 20 38 30 42C14 39 1 28 2 16Z" fill="#7f8ea6" fillOpacity=".75" />
          <path d="M30 42C38 44 47 41 52 34" stroke="#8997ae" strokeOpacity=".6" strokeWidth="1.500" />
          <path d="M42 23C52 18 60 25 57 36C53 49 42 57 27 57C38 52 48 44 51 34C52 27 48 23 42 23Z" fill="#e46a75" fillOpacity=".75" />
          <path d="M30 57C26 47 31 32 42 23" stroke="#d27b89" strokeOpacity=".7" strokeWidth="2" />
        </Svg>
      </div>
      <div className="absolute top-0 left-[69px] text-[29px] leading-10 font-bold whitespace-nowrap text-[#5db886]/75">野火论坛</div>
    </div>
  );
}

export default function App() {
  return (
    <div className="relative flex h-screen w-full flex-col overflow-hidden bg-[#b8bcbe] font-['Noto_Sans','Noto_Sans_CJK_SC',sans-serif] text-[#404040]">
      <div className="flex min-h-0 flex-1 flex-col pt-1 pl-1">
        <div className="bg-[#e2e2e2]">
          <TitleBar />
          <nav role="tablist" className="flex h-[25px]">
            {tabs.map((t) => (
              <button key={t.text} role="tab" aria-selected={t.text === "视图"} className={`shrink-0 text-[15px] leading-5 ${t.cls}`}>{t.text}</button>
            ))}
            <span className="flex-1 border-b border-[#cbcbcb]" />
          </nav>
        </div>
        <Ribbon />
        <div className="h-0.5 shrink-0 bg-[#9da1a4]" />
        <main className="flex min-h-0 flex-1">
          <TreePanel />
          <div className="relative min-w-0 flex-1 overflow-hidden bg-[#e7e9ed]">
            <ModelView />
            <div role="toolbar" aria-label="图形工具栏" className="absolute top-[95px] left-[5px] flex h-[322px] w-8 flex-col items-center justify-between border border-[#a5a8ab] bg-[#f6f7f8] py-[3px]">
              {viewTools.map((t) => (
                <button key={t.name} type="button" aria-label={t.name} className={`flex h-[23px] w-[23px] items-center justify-center ${t.on ? "border border-[#aeb1b4] bg-[#dcdfe1]" : ""}`}>
                  <Svg w={18}>{t.art}</Svg>
                </button>
              ))}
            </div>
          </div>
        </main>
        <div className="h-[3px] shrink-0 bg-[#9c9e9e]" />
        <footer className="flex h-[27px] shrink-0 items-end gap-1 bg-[#eeeff0] pl-1.5">
          <button aria-label="模型树" aria-pressed="true" className="flex h-5 w-[22px] items-center justify-center border border-b-0 border-[#b4b7ba] bg-[#dfe1e3]"><Svg w={15} h={18} box="0 0 17 20"><TreeNodes /></Svg></button>
          <button aria-label="浏览器" className="flex h-5 w-[22px] items-center justify-center"><Svg w={18}><circle cx="9" cy="9" r="7" fill="#56a9d5" /><path d="M4 6C7 2 10 4 9 7L6 10ZM10 9L14 8L13 13L9 14Z" fill="#16629a" /><ellipse cx="9" cy="9" rx="9" ry="4" transform="rotate(-48 9 9)" stroke="#5b6d79" /></Svg></button>
          <button aria-label="全屏" className="flex h-5 w-[22px] items-center justify-center"><Svg><defs><linearGradient id="pane" x2="0" y2="1"><stop stopColor="#fff" /><stop offset="1" stopColor="#b9dcec" /></linearGradient></defs><rect x=".7" y=".7" width="14.600" height="14.600" fill="url(#pane)" stroke="#3f6e84" strokeWidth="1.400" /></Svg></button>
          <div className="ml-1 h-5 w-px bg-[#b0b3b5]" />
          <div className="mr-[215px] ml-auto h-6 w-px bg-[#a0a3a5]" />
        </footer>
      </div>
      <div className="relative h-2.5 shrink-0 overflow-hidden border-t border-[#1c2f40] bg-linear-to-r from-[#8bb5dc] via-[#6d9dcb] to-[#2f5681]">
        <button aria-label="任务" className="absolute top-0 left-0 h-4 w-[60px] rounded-tr border-r border-[#334d66] bg-[#c2d9ec] pt-1 pl-3.5">
          <span className="block h-3 w-8 border border-[#2c4050] bg-white pt-1"><span className="mx-auto block h-2 w-5 bg-[#465966]" /></span>
        </button>
        <div className="absolute top-0.5 right-[35px] text-[13px] text-white">16:52</div>
        <div className="absolute top-0 right-0 h-4 w-3.5 border-l border-[#1e3a58] bg-white/30" />
      </div>
      <SpeedWidget />
      <Watermark />
    </div>
  );
}
